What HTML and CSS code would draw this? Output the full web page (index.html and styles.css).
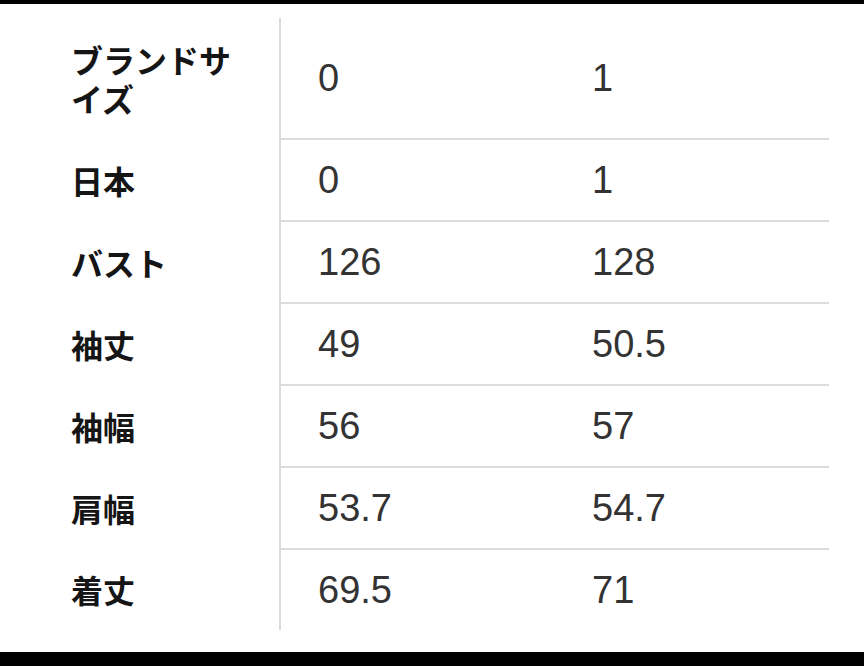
FILE: index.html
```html
<!DOCTYPE html>
<html lang="ja">
<head>
<meta charset="utf-8">
<link rel="stylesheet" href="styles.css">
</head>
<body>
<div class="screen">
  <div class="bar-top"></div>
  <main class="content">
    <table class="size-table">
      <tbody>
        <tr class="row-first">
          <th>ブランドサイズ</th>
          <td>0</td>
          <td>1</td>
        </tr>
        <tr>
          <th>日本</th>
          <td>0</td>
          <td>1</td>
        </tr>
        <tr>
          <th>バスト</th>
          <td>126</td>
          <td>128</td>
        </tr>
        <tr>
          <th>袖丈</th>
          <td>49</td>
          <td>50.5</td>
        </tr>
        <tr>
          <th>袖幅</th>
          <td>56</td>
          <td>57</td>
        </tr>
        <tr>
          <th>肩幅</th>
          <td>53.7</td>
          <td>54.7</td>
        </tr>
        <tr>
          <th>着丈</th>
          <td>69.5</td>
          <td>71</td>
        </tr>
      </tbody>
    </table>
  </main>
  <div class="bar-bottom"></div>
</div>
</body>
</html>
```

FILE: styles.css
```css
html, body {
  margin: 0;
  padding: 0;
  background: #ffffff;
}

.screen {
  width: 864px;
  height: 666px;
  display: flex;
  flex-direction: column;
  overflow: hidden;
}

.bar-top {
  height: 4px;
  background: #000;
  flex: none;
}

.content {
  flex: 1;
  padding-top: 14px;
  background: #fff;
}

.bar-bottom {
  height: 14px;
  background: #000;
  flex: none;
}

.size-table {
  border-collapse: collapse;
  border-spacing: 0;
}

.size-table th {
  width: 178px;
  padding: 0 30px 0 71px;
  border-right: 2px solid #dcdcdc;
  text-align: left;
  vertical-align: middle;
  font-family: "Noto Sans CJK JP", sans-serif;
  font-weight: 700;
  font-size: 32px;
  line-height: 39px;
  color: #151515;
  height: 80px;
}

.size-table td {
  width: 237px;
  padding: 0 0 0 37px;
  height: 80px;
  border-top: 2px solid #dcdcdc;
  vertical-align: middle;
  font-family: "Liberation Sans", Arial, sans-serif;
  font-size: 38px;
  color: #333;
  line-height: 40px;
}

.size-table .row-first th,
.size-table .row-first td {
  height: 120px;
  border-top: none;
}
```
